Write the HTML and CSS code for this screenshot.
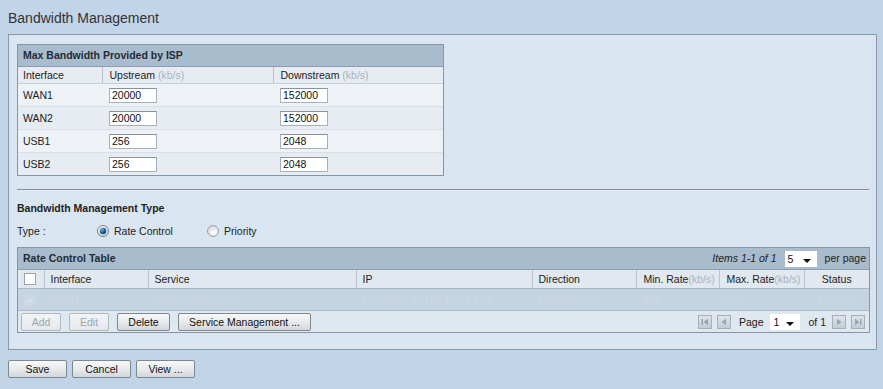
FILE: index.html
```html
<!DOCTYPE html>
<html>
<head>
<meta charset="utf-8">
<title>Bandwidth Management</title>
<link rel="stylesheet" href="styles.css">
</head>
<body>
<div class="page">
  <h1 class="title">Bandwidth Management</h1>
  <div class="panel">
    <div class="box isp">
      <div class="box-head">Max Bandwidth Provided by ISP</div>
      <table class="grid">
        <colgroup><col class="c-if"><col class="c-up"><col class="c-down"></colgroup>
        <thead>
          <tr class="colhead"><th>Interface</th><th>Upstream <span class="unit">(kb/s)</span></th><th>Downstream <span class="unit">(kb/s)</span></th></tr>
        </thead>
        <tbody>
          <tr class="row odd"><td>WAN1</td><td><input class="field" value="20000"></td><td><input class="field" value="152000"></td></tr>
          <tr class="row even"><td>WAN2</td><td><input class="field" value="20000"></td><td><input class="field" value="152000"></td></tr>
          <tr class="row odd"><td>USB1</td><td><input class="field" value="256"></td><td><input class="field" value="2048"></td></tr>
          <tr class="row even"><td>USB2</td><td><input class="field" value="256"></td><td><input class="field" value="2048"></td></tr>
        </tbody>
      </table>
    </div>

    <div class="sep"></div>

    <div class="sub-title">Bandwidth Management Type</div>
    <div class="type-row">
      <span class="type-label">Type :</span>
      <span class="radio-opt">
        <svg class="radio" width="12" height="12" viewBox="0 0 12 12">
          <defs>
            <radialGradient id="rg1" cx="0.4" cy="0.35" r="0.7"><stop offset="0" stop-color="#ffffff"/><stop offset="1" stop-color="#c9ced3"/></radialGradient>
            <radialGradient id="dot" cx="0.35" cy="0.3" r="0.8"><stop offset="0" stop-color="#7fb3dc"/><stop offset="0.5" stop-color="#1d6aa8"/><stop offset="1" stop-color="#0b3a66"/></radialGradient>
          </defs>
          <circle cx="6" cy="6" r="5.5" fill="url(#rg1)" stroke="#7c858e"/>
          <circle cx="6" cy="6" r="3.2" fill="url(#dot)"/>
        </svg>
        <span>Rate Control</span>
      </span>
      <span class="radio-opt second">
        <svg class="radio" width="12" height="12" viewBox="0 0 12 12">
          <defs>
            <radialGradient id="rg2" cx="0.6" cy="0.65" r="0.7"><stop offset="0" stop-color="#ffffff"/><stop offset="1" stop-color="#d2d6da"/></radialGradient>
          </defs>
          <circle cx="6" cy="6" r="5.5" fill="url(#rg2)" stroke="#9aa1a8"/>
        </svg>
        <span>Priority</span>
      </span>
    </div>

    <div class="box rate">
      <div class="box-head rate-head">
        <span>Rate Control Table</span>
        <span class="pager-top">
          <span class="items">Items 1-1 of 1</span>
          <span class="select"><span>5</span><i class="caret"></i></span>
          <span class="perpage">per page</span>
        </span>
      </div>
      <table class="grid">
        <colgroup>
          <col class="r-cb"><col class="r-if"><col class="r-svc"><col class="r-ip"><col class="r-dir"><col class="r-min"><col class="r-max"><col class="r-st">
        </colgroup>
        <thead>
          <tr class="colhead rc">
            <th><span class="cbox"></span></th>
            <th>Interface</th>
            <th>Service</th>
            <th>IP</th>
            <th>Direction</th>
            <th>Min. Rate<span class="unit">(kb/s)</span></th>
            <th>Max. Rate<span class="unit">(kb/s)</span></th>
            <th class="center">Status</th>
          </tr>
        </thead>
        <tbody>
          <tr class="datarow">
            <td><span class="cbox checked"><svg width="10" height="10" viewBox="0 0 10 10"><path d="M2 5.2 L4.2 7.5 L8.2 2.2" fill="none" stroke="#d5e0ea" stroke-width="1.6"/></svg></span></td>
            <td>WAN1</td>
            <td>TFTP[UDP/69~69]</td>
            <td>192.168.1.1~192.168.1.254</td>
            <td>Downstream</td>
            <td>500</td>
            <td>500</td>
            <td class="center">Enabled</td>
          </tr>
          <tr class="footrow">
            <td colspan="8">
              <div class="foot">
                <div class="btns">
                  <button class="btn disabled w40">Add</button>
                  <button class="btn disabled w40">Edit</button>
                  <button class="btn w53">Delete</button>
                  <button class="btn w133">Service Management ...</button>
                </div>
                <div class="pager">
                  <span class="pbtn"><svg width="12" height="12" viewBox="0 0 12 12"><rect x="2.5" y="3" width="1.5" height="6" fill="#9aa3ac"/><path d="M9 2.8 L4.6 6 L9 9.2 Z" fill="#9aa3ac"/></svg></span>
                  <span class="pbtn"><svg width="12" height="12" viewBox="0 0 12 12"><path d="M8 2.8 L3.6 6 L8 9.2 Z" fill="#9aa3ac"/></svg></span>
                  <span class="plabel">Page</span>
                  <span class="select psel"><span>1</span><i class="caret"></i></span>
                  <span class="plabel of">of 1</span>
                  <span class="pbtn"><svg width="12" height="12" viewBox="0 0 12 12"><path d="M4 2.8 L8.4 6 L4 9.2 Z" fill="#9aa3ac"/></svg></span>
                  <span class="pbtn"><svg width="12" height="12" viewBox="0 0 12 12"><path d="M3 2.8 L7.4 6 L3 9.2 Z" fill="#9aa3ac"/><rect x="8" y="3" width="1.5" height="6" fill="#9aa3ac"/></svg></span>
                </div>
              </div>
            </td>
          </tr>
        </tbody>
      </table>
    </div>
  </div>

  <div class="actions">
    <button class="btn big">Save</button>
    <button class="btn big">Cancel</button>
    <button class="btn big">View ...</button>
  </div>
</div>
</body>
</html>
```
FILE: styles.css
```css
html, body {
  margin: 0;
  padding: 0;
}
body {
  background: #c1d4e8;
  font-family: "Liberation Sans", Arial, sans-serif;
  font-size: 10.5px;
  color: #222;
}
.page {
  padding: 7px 6px 10px 8px;
}
.title {
  margin: 0;
  font-size: 14px;
  font-weight: normal;
  line-height: 22px;
  color: #333;
}
.panel {
  margin-top: 5px;
  border: 1px solid #8b99a8;
  background: #d9e5f0;
  padding: 9px 6px 16px 8px;
}

/* boxes / tables */
.box {
  border: 1px solid #8796a5;
  background: #eef2f6;
}
.box.isp {
  width: 427px;
  box-sizing: border-box;
}
.box-head {
  height: 21px;
  line-height: 21px;
  padding-left: 5px;
  background: #a9bccd;
  border-bottom: 1px solid #8f9eae;
  font-weight: bold;
  color: #1f2b37;
}
.grid {
  width: 100%;
  border-collapse: collapse;
  table-layout: fixed;
}
.grid th, .grid td {
  padding: 0;
  text-align: left;
  white-space: nowrap;
  overflow: hidden;
}
.grid th {
  font-weight: normal;
  color: #222;
}
.c-if { width: 84px; }
.c-up { width: 171px; }
.c-down { width: auto; }

.colhead th {
  height: 16px;
  background: #e6ecf2;
  border-bottom: 1px solid #c6d0da;
  border-left: 1px solid #b6c2ce;
  padding-left: 7px;
}
.colhead th:first-child {
  border-left: none;
  padding-left: 5px;
}
.unit {
  color: #a9b3bd;
}
.row td {
  height: 22px;
  border-bottom: 1px solid #d7e0e8;
}
.row:last-child td {
  border-bottom: none;
}
.row td:first-child {
  padding-left: 5px;
}
.row td + td {
  padding-left: 7px;
}
.row.odd td { background: #eef2f6; }
.row.even td { background: #e6ecf2; }
.field {
  box-sizing: border-box;
  width: 48px;
  height: 15px;
  padding: 0 0 0 2px;
  margin: 0;
  border: 1px solid #a8b0b8;
  border-top-color: #8a939c;
  background: #fff;
  font-family: "Liberation Sans", Arial, sans-serif;
  font-size: 10.5px;
  color: #111;
  display: block;
}

.sep {
  margin-top: 13px;
  margin-right: 1px;
  border-top: 1px solid #838e99;
  border-bottom: 1px solid #e6edf4;
}
.sub-title {
  margin-top: 9px;
  line-height: 16px;
  font-weight: bold;
  color: #222;
}
.type-row {
  margin-top: 7px;
  height: 16px;
  display: flex;
  align-items: center;
}
.type-label {
  width: 80px;
}
.radio-opt {
  display: flex;
  align-items: center;
  gap: 5px;
}
.radio-opt.second {
  margin-left: 34px;
}
.radio {
  display: block;
}

/* rate table */
.box.rate {
  margin-top: 8px;
  background: #dfe7ef;
}
.rate-head {
  display: flex;
  justify-content: space-between;
  align-items: center;
  padding-right: 3px;
}
.pager-top {
  display: flex;
  align-items: center;
  font-weight: normal;
  color: #222;
}
.items {
  font-style: italic;
}
.select {
  position: relative;
  display: inline-block;
  box-sizing: border-box;
  width: 32px;
  height: 16px;
  line-height: 16px;
  background: #fff;
  padding-left: 3px;
  color: #111;
}
.pager-top .select {
  margin: 0 8px;
}
.caret {
  position: absolute;
  right: 6px;
  top: 8px;
  width: 0;
  height: 0;
  border-left: 4px solid transparent;
  border-right: 4px solid transparent;
  border-top: 4px solid #111;
}
.r-cb { width: 26px; }
.r-if { width: 104px; }
.r-svc { width: 208px; }
.r-ip { width: 176px; }
.r-dir { width: 104px; }
.r-min { width: 83px; }
.r-max { width: 85px; }
.r-st { width: auto; }

.colhead.rc th {
  height: 18px;
  background: #e1e8ef;
  border-bottom: 1px solid #aab7c4;
  padding-left: 6px;
}
.colhead.rc th:first-child {
  padding-left: 6px;
}
.colhead.rc th:nth-child(6),
.colhead.rc th:nth-child(7) {
  padding-left: 7px;
}
.center {
  text-align: center !important;
  padding-left: 0 !important;
}
.cbox {
  display: block;
  box-sizing: border-box;
  width: 12px;
  height: 12px;
  border: 1px solid #97a3ae;
  background: #fff;
}
.cbox.checked {
  background: #c9d8e6;
  border-color: #cbd8e4;
}
.cbox svg {
  display: block;
}
.datarow td {
  height: 21px;
  background: #c4d4e3;
  border-bottom: 1px solid #aebdcc;
  color: #ccd8e4;
  padding-left: 6px;
}
.datarow td:nth-child(6),
.datarow td:nth-child(7) {
  padding-left: 7px;
}
.footrow td {
  height: 21px;
  background: #dfe7ef;
}
.foot {
  display: flex;
  justify-content: space-between;
  align-items: center;
  padding: 0 4px 0 3px;
}
.btns {
  display: flex;
  gap: 8px;
}
.btn {
  box-sizing: border-box;
  height: 18px;
  padding: 0;
  margin: 0;
  border: 1px solid #7e8893;
  border-radius: 2px;
  background: linear-gradient(#f7f8f9, #e8eaec 50%, #d3d7db);
  font-family: "Liberation Sans", Arial, sans-serif;
  font-size: 10.5px;
  color: #111;
  text-align: center;
}
.btn.w40 { width: 40px; }
.btn.w53 { width: 53px; }
.btn.w133 { width: 133px; }
.btn.disabled {
  color: #a0a6ac;
  border-color: #b0b9c2;
  background: linear-gradient(#f2f4f6, #e4e8ec);
}
.pager {
  display: flex;
  align-items: center;
}
.pbtn {
  box-sizing: border-box;
  width: 14px;
  height: 14px;
  border: 1px solid #a6b0ba;
  background: linear-gradient(#dde3e9, #c3ccd5);
  display: flex;
  align-items: center;
  justify-content: center;
}
.pbtn + .pbtn {
  margin-left: 5px;
}
.plabel {
  margin: 0 7px 0 8px;
}
.plabel.of {
  margin: 0 6px 0 8px;
}
.psel {
  width: 30px;
}

.actions {
  margin-top: 10px;
  display: flex;
  gap: 5px;
}
.btn.big {
  width: 59px;
}
```
